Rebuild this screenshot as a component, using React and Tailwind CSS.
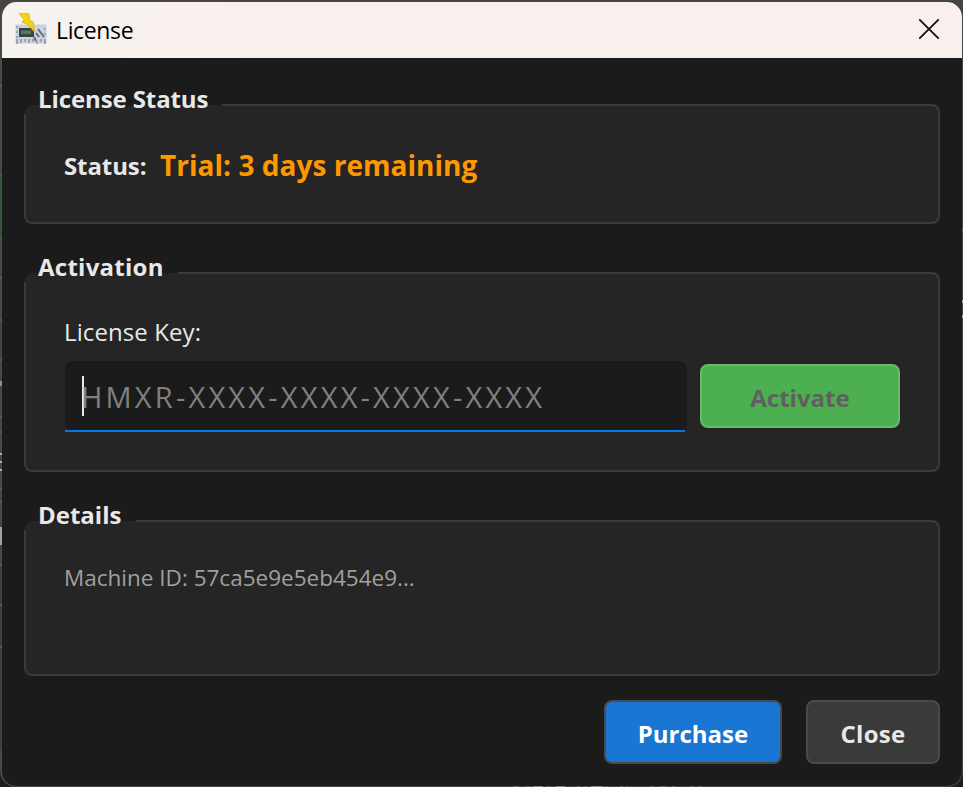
import React from 'react';

// slivers of the windows behind the dialog, top to bottom: [height, colour]
const leftEdge = [
    [65, '#484848'], [2, '#5a5a5a'], [87, '#484848'], [2, '#4c5a4c'], [61, '#3a513a'], [2, '#4c5f4c'],
    [38, '#484848'], [2, '#5a5a5a'], [40, '#484848'], [2, '#5a5a5a'], [38, '#454545'], [2, '#5a5a5a'],
    [20, '#484848'], [5, '#7d93aa'], [30, '#484848'], [2, '#5a5a5a'], [13, '#484848'], [2, '#5a5a5a'],
    [20, '#484848'], [2, '#a8a8a8'], [6, '#484848'], [2, '#a8a8a8'], [6, '#484848'], [2, '#a8a8a8'],
    [17, '#484848'], [2, '#5a5a5a'], [11, '#484848'], [2, '#5a5a5a'], [24, '#484848'], [18, '#a3a3a3'],
    [19, '#484848'], [2, '#5a5a5a'], [38, '#404040'], [2, '#5a5a5a'], [40, '#404040'], [2, '#5a5a5a'],
    [102, '#404040'],
];

const rightEdge = [
    [208, '#454545'], [3, '#80603a'], [69, '#454545'], [3, '#8fbf8f'], [12, '#3f4a3f'], [3, '#8fbf8f'],
    [20, '#3f4a3f'], [430, '#454545'],
];

const bottomEdge = [
    [5, '#707070'], [7, '#484848'], [4, '#686868'], [3, '#484848'], [10, '#888'], [4, '#484848'],
    [4, '#686868'], [5, '#484848'], [9, '#888'], [12, '#484848'], [3, '#707070'], [4, '#484848'],
    [3, '#686868'], [4, '#484848'], [12, '#888'], [2, '#484848'], [3, '#686868'], [12, '#484848'],
    [3, '#707070'], [3, '#484848'], [2, '#686868'], [22, '#484848'], [3, '#686868'], [6, '#484848'],
    [7, '#686868'], [6, '#484848'], [3, '#707070'], [16, '#484848'], [3, '#686868'], [5, '#484848'], [3, '#686868'],
];

const AppLogo = () => (
    <svg width="32" height="34" viewBox="0 0 32 34" className="shrink-0">
        <g className="blur-[0.6px]">
            <rect x="0.5" y="11.5" width="31" height="19" rx="1" fill="#cdd1da" />
            <path d="M2 26v5M6 26v4M10 26v3M14 26v4M18 26v3M22 28v3M26 26v3M30 26v5" stroke="#9aa4b8" strokeWidth="2" />
            <path d="M1 14h2M1 19h2M1 24h2M29 16h2M29 21h2" stroke="#9ca6b8" strokeWidth="2" />
            <rect x="4" y="15" width="15" height="9" fill="#39414b" />
            <rect x="6" y="17.5" width="10" height="3.5" fill="#4f804e" />
            <path d="M21 20l3 4M23 16l3 4M26 20l3 4M19 24l2 4" stroke="#5e6b80" strokeWidth="2" />
        </g>
        <path d="M4 0.4h9.5l1.5 4.6-1.5 2 4.5 1.8L19.4 19 12 11 7 9.200 9 6.5z" fill="#fbd20c" stroke="#cfa722" strokeWidth="0.7" />
    </svg>
);

const GroupBox = ({ title, titleClass, textClass, className, children }) => (
    <section className={`relative rounded-lg border-2 border-[#3a3a3a] bg-[#252525] ${className}`}>
        {/* title sits on top of the border and hides its corner */}
        <div className={`absolute -left-0.5 -top-0.5 h-2.5 bg-[#1b1b1b] pl-px pt-px ${titleClass}`}>
            <div className="h-full rounded-tl-lg bg-[#252525]" />
            <h2 className={`absolute left-[14px] -top-[21px] h-8 whitespace-nowrap text-[24px] leading-8 font-bold text-[#e8e8e8] ${textClass}`}>{title}</h2>
        </div>
        {children}
    </section>
);

const App = () => {
    return (
        <div className="relative h-[787px] w-[963px] overflow-hidden bg-linear-to-b from-[#464443] to-[#1e1e1e] pt-px font-['Open_Sans','Noto_Sans',sans-serif]">
            <div className="flex h-full flex-col overflow-hidden rounded-2xl border border-l-2 border-[#484848] bg-[#1b1b1b]">
                <header className="flex h-14 shrink-0 items-center bg-linear-to-r from-[#f6f3ef] via-[#f9f0ed] via-25% to-[#f9f0ed] pl-[13px] pr-[22px]">
                    <AppLogo />
                    <h1 className="ml-[9px] flex-1 text-[23px] tracking-[-0.35px] text-black">License</h1>
                    <button aria-label="Close window" className="mb-0.5">
                        <svg width="22" height="22" viewBox="0 0 22 22" fill="none" stroke="#111" strokeWidth="1.8">
                            <path d="M1.3 1.3l19.4 19.4M20.7 1.3L1.3 20.7" />
                        </svg>
                    </button>
                </header>

                <main className="flex flex-1 flex-col pl-[22px] pr-[22px] pt-[46px]">
                    <GroupBox title="License Status" titleClass="w-[198px]" textClass="tracking-[-0.1px]" className="h-[120px]">
                        <div className="flex items-center pl-[38px] pt-9">
                            <span className="w-[96px] pt-0.5 text-[24px] leading-[44px] tracking-[-0.1px] font-bold text-[#e8e8e8]">Status:</span>
                            <span className="whitespace-nowrap text-[28px] leading-[44px] tracking-[0.03px] font-bold text-[#ff9800]">Trial: 3 days remaining</span>
                        </div>
                    </GroupBox>

                    <GroupBox title="Activation" titleClass="w-[154px]" textClass="tracking-[0.25px]" className="mt-12 h-[200px]">
                        <div className="pl-[39px] pr-[38px] pt-[40px]">
                            <label className="-ml-px block h-[47px] text-[24px] leading-9 tracking-[0.1px] text-[#e8e8e8]">License Key:</label>
                            <div className="flex gap-[13px]">
                                <div className="relative flex h-[71px] w-[622px] items-center rounded-lg bg-[#1b1b1b] pl-[17px]">
                                    <span className="-mt-0.5 h-10 w-0.5 bg-[#e8e8e8]" />
                                    <span className="-ml-[3px] whitespace-nowrap text-[29px] tracking-[3.2px] text-[#808080]">HMXR-XXXX-XXXX-XXXX-XXXX</span>
                                    <span className="absolute bottom-0 left-0 h-0.5 w-[620px] bg-[#0078e0]" />
                                </div>
                                <button className="mt-[3px] h-16 w-[200px] rounded-lg border-2 border-[#66bb6a] bg-[#4caf50] pt-[3px] text-[24px] font-bold text-[#606060]">Activate</button>
                            </div>
                        </div>
                    </GroupBox>

                    <GroupBox title="Details" titleClass="w-[112px]" className="mt-12 h-[156px]">
                        <p className="pl-[38px] pt-[38px] text-[22.5px] leading-9 text-[#a0a0a0]">Machine ID: 57ca5e9e5eb454e9...</p>
                    </GroupBox>

                    <div className="mt-6 flex justify-end gap-6">
                        <button className="h-16 w-[178px] rounded-lg border-2 border-[#4a4a4a] bg-[#1976d2] pt-[3px] text-[24px] font-bold text-white">Purchase</button>
                        <button className="h-16 w-[134px] rounded-lg border-2 border-[#4a4a4a] bg-[#3a3a3a] pt-[3px] text-[24px] tracking-[0.3px] font-bold text-[#e8e8e8]">Close</button>
                    </div>
                </main>
            </div>

            <div className="absolute left-0 top-5 flex h-[748px] w-0.5 flex-col overflow-hidden">
                {leftEdge.map(([size, color], index) => (
                    <span key={index} className="shrink-0" style={{ height: size, backgroundColor: color }} />
                ))}
            </div>
            <div className="absolute right-0 top-5 flex h-[748px] w-px flex-col overflow-hidden">
                {rightEdge.map(([size, color], index) => (
                    <span key={index} className="shrink-0" style={{ height: size, backgroundColor: color }} />
                ))}
            </div>
            <div className="absolute bottom-0 left-[514px] flex h-px">
                {bottomEdge.map(([size, color], index) => (
                    <span key={index} className="shrink-0" style={{ width: size, backgroundColor: color }} />
                ))}
            </div>
        </div>
    );
};

export default App;
